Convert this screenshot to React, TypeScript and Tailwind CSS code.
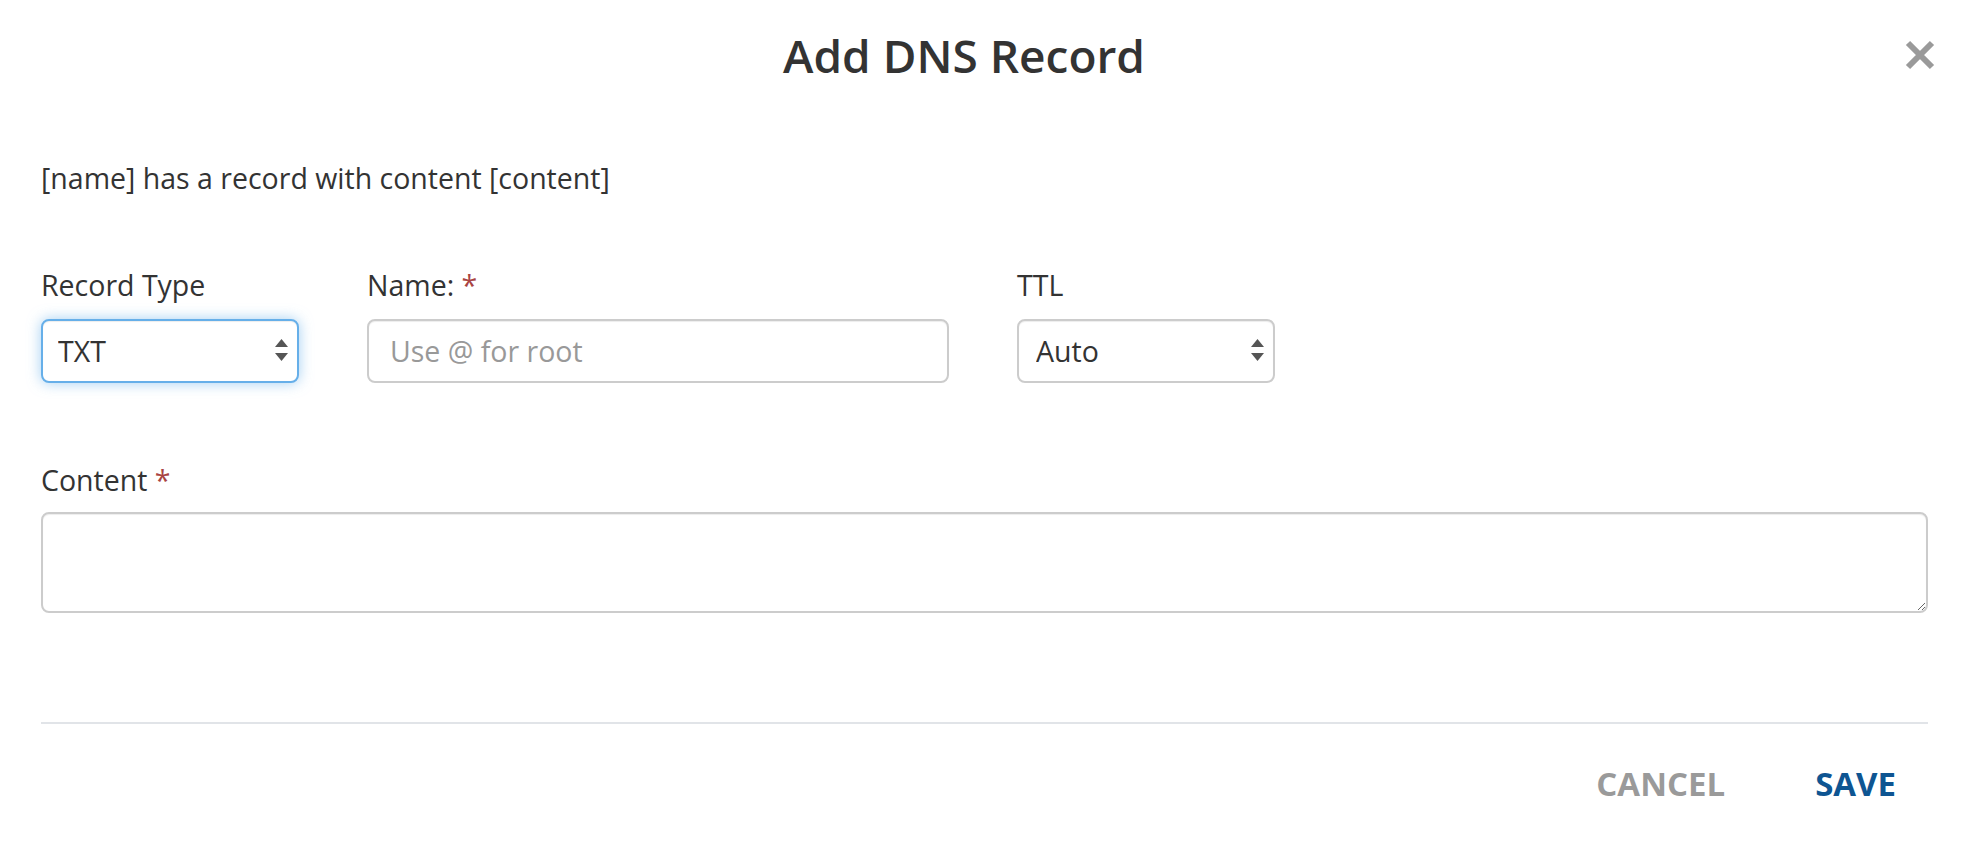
export default function App() {
  return (
    <div className="relative w-[1964px] h-[856px] bg-white text-[#333] font-['Open_Sans',sans-serif]">
      {/* HEADER */}
      <div className="pt-[27px] pr-[36px] text-center text-[46px] leading-[56px] font-semibold">
        Add DNS Record
      </div>
      <button className="absolute left-[1905px] top-[40px] w-[30px] h-[30px]" aria-label="Close">
        <svg viewBox="0 0 30 30" className="w-[30px] h-[30px]">
          <path d="M3 3 L27 27 M27 3 L3 27" stroke="#9a9a9a" strokeWidth="6" />
        </svg>
      </button>

      {/* BODY */}
      <div className="pl-[41px] pr-[36px]">
        <p className="mt-[75px] text-[28.5px] leading-[40px]">
          [name] has a record with content [content]
        </p>

        <div className="mt-[67px] flex gap-[68px]">
          <div className="w-[258px]">
            <label className="block text-[28.5px] leading-[40px] mb-[14px]">Record Type</label>
            <div className="relative">
              <select
                defaultValue="TXT"
                className="w-full h-[64px] appearance-none bg-white border-2 border-[#66afe9] rounded-[8px] pl-[15px] text-[28.5px] text-[#333] outline-none shadow-[inset_0_1px_1px_rgba(0,0,0,0.075),0_0_14px_rgba(102,175,233,0.6)]"
              >
                <option>TXT</option>
                <option>A</option>
                <option>CNAME</option>
              </select>
              <Arrows />
            </div>
          </div>

          <div className="w-[582px]">
            <label className="block text-[28.5px] leading-[40px] mb-[14px]">
              Name: <span className="text-[#a94442]">*</span>
            </label>
            <input
              type="text"
              placeholder="Use @ for root"
              className="w-full h-[64px] border-2 border-[#cccccc] rounded-[8px] pl-[21px] text-[28.5px] text-[#333] placeholder:text-[#999] outline-none shadow-[inset_0_1px_1px_rgba(0,0,0,0.075)]"
            />
          </div>

          <div className="w-[258px]">
            <label className="block text-[28.5px] leading-[40px] mb-[14px]">TTL</label>
            <div className="relative">
              <select
                defaultValue="Auto"
                className="w-full h-[64px] appearance-none bg-white border-2 border-[#cccccc] rounded-[8px] pl-[17px] text-[28.5px] text-[#333] outline-none shadow-[inset_0_1px_1px_rgba(0,0,0,0.075)]"
              >
                <option>Auto</option>
                <option>1 min</option>
                <option>1 hour</option>
              </select>
              <Arrows />
            </div>
          </div>
        </div>

        <label className="block mt-[77px] text-[28.5px] leading-[40px] mb-[12px]">
          Content <span className="text-[#a94442]">*</span>
        </label>
        <textarea className="block w-full h-[101px] border-2 border-[#cccccc] rounded-[8px] px-[20px] py-[10px] text-[28.5px] outline-none shadow-[inset_0_1px_1px_rgba(0,0,0,0.075)]" />

        <div className="mt-[109px] h-[2px] bg-[#e1e4e8]" />

        {/* FOOTER */}
        <div className="mt-[38px] flex justify-end gap-[90px] pr-[32px] text-[33px] leading-[44px] font-bold">
          <button className="text-[#9a9a9a]">CANCEL</button>
          <button className="text-[#0e5592]">SAVE</button>
        </div>
      </div>
    </div>
  );
}

function Arrows() {
  return (
    <svg
      viewBox="0 0 13 22"
      className="pointer-events-none absolute right-[11px] top-[20px] w-[13px] h-[22px]"
    >
      <polygon points="6.5,0 13,8 0,8" fill="#555" />
      <polygon points="0,14 13,14 6.5,22" fill="#555" />
    </svg>
  );
}
